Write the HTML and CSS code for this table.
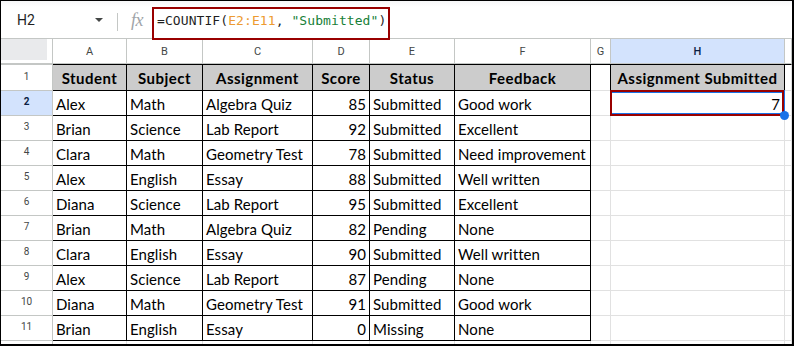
FILE: index.html
```html
<!DOCTYPE html>
<html>
<head>
<meta charset="utf-8">
<link rel="stylesheet" href="styles.css">
</head>
<body>
<div class="frame">
  <div class="toolbar">
    <div class="namebox"><span class="ref">H2</span><span class="caret"></span></div>
    <div class="sep"></div>
    <div class="fx">fx</div>
    <div class="formula">=COUNTIF(<span class="rng">E2:E11</span>, <span class="str">"Submitted"</span>)</div>
    <div class="annot-formula"></div>
  </div>
  <div class="sheet">
    <div class="c corner"><div class="corner-fill"></div></div>
    <div class="c ch">A</div><div class="c ch">B</div><div class="c ch">C</div><div class="c ch">D</div><div class="c ch">E</div><div class="c ch">F</div><div class="c ch">G</div><div class="c ch sel">H</div><div class="c ch"></div>

    <div class="c rn r1">1</div>
    <div class="c d h r1">Student</div><div class="c d h r1">Subject</div><div class="c d h r1">Assignment</div><div class="c d h r1">Score</div><div class="c d h r1">Status</div><div class="c d h r1">Feedback</div>
    <div class="c g r1 gb"></div><div class="c d h r1">Assignment Submitted</div><div class="c r1"></div>

    <div class="c rn rsel">2</div>
    <div class="c d">Alex</div><div class="c d">Math</div><div class="c d">Algebra Quiz</div><div class="c d n">85</div><div class="c d">Submitted</div><div class="c d">Good work</div>
    <div class="c g"></div><div class="c n result">7</div><div class="c"></div>

    <div class="c rn">3</div>
    <div class="c d">Brian</div><div class="c d">Science</div><div class="c d">Lab Report</div><div class="c d n">92</div><div class="c d">Submitted</div><div class="c d">Excellent</div>
    <div class="c g"></div><div class="c"></div><div class="c"></div>

    <div class="c rn">4</div>
    <div class="c d">Clara</div><div class="c d">Math</div><div class="c d">Geometry Test</div><div class="c d n">78</div><div class="c d">Submitted</div><div class="c d">Need improvement</div>
    <div class="c g"></div><div class="c"></div><div class="c"></div>

    <div class="c rn">5</div>
    <div class="c d">Alex</div><div class="c d">English</div><div class="c d">Essay</div><div class="c d n">88</div><div class="c d">Submitted</div><div class="c d">Well written</div>
    <div class="c g"></div><div class="c"></div><div class="c"></div>

    <div class="c rn">6</div>
    <div class="c d">Diana</div><div class="c d">Science</div><div class="c d">Lab Report</div><div class="c d n">95</div><div class="c d">Submitted</div><div class="c d">Excellent</div>
    <div class="c g"></div><div class="c"></div><div class="c"></div>

    <div class="c rn">7</div>
    <div class="c d">Brian</div><div class="c d">Math</div><div class="c d">Algebra Quiz</div><div class="c d n">82</div><div class="c d">Pending</div><div class="c d">None</div>
    <div class="c g"></div><div class="c"></div><div class="c"></div>

    <div class="c rn">8</div>
    <div class="c d">Clara</div><div class="c d">English</div><div class="c d">Essay</div><div class="c d n">90</div><div class="c d">Submitted</div><div class="c d">Well written</div>
    <div class="c g"></div><div class="c"></div><div class="c"></div>

    <div class="c rn">9</div>
    <div class="c d">Alex</div><div class="c d">Science</div><div class="c d">Lab Report</div><div class="c d n">87</div><div class="c d">Pending</div><div class="c d">None</div>
    <div class="c g"></div><div class="c"></div><div class="c"></div>

    <div class="c rn">10</div>
    <div class="c d">Diana</div><div class="c d">Math</div><div class="c d">Geometry Test</div><div class="c d n">91</div><div class="c d">Submitted</div><div class="c d">Good work</div>
    <div class="c g"></div><div class="c"></div><div class="c"></div>

    <div class="c rn">11</div>
    <div class="c d">Brian</div><div class="c d">English</div><div class="c d">Essay</div><div class="c d n">0</div><div class="c d">Missing</div><div class="c d">None</div>
    <div class="c g"></div><div class="c"></div><div class="c"></div>

    <div class="c rn last"></div><div class="c last"></div><div class="c last"></div><div class="c last"></div><div class="c last"></div><div class="c last"></div><div class="c last"></div><div class="c last"></div><div class="c last"></div><div class="c last"></div>

    <div class="annot-cell"></div>
    <div class="sel-edge"></div>
    <div class="handle"></div>
  </div>
</div>
</body>
</html>
```

FILE: styles.css
```css
* { box-sizing: border-box; }
html, body { margin: 0; padding: 0; background: #fff; }
.frame {
  width: 794px;
  height: 346px;
  border-top: 1px solid #000;
  border-left: 1px solid #000;
  border-right: 2px solid #000;
  border-bottom: 2px solid #000;
  overflow: hidden;
  position: relative;
  display: flex;
  flex-direction: column;
}
.toolbar {
  height: 38px;
  flex: none;
  border-bottom: 1px solid #c4c7c5;
  display: flex;
  align-items: center;
  position: relative;
  background: linear-gradient(#f6f7f8 0, #fff 6px);
}
.namebox {
  width: 116px;
  display: flex;
  align-items: center;
  padding-left: 16px;
  padding-top: 1px;
}
.ref {
  font-family: Roboto, "Liberation Sans", sans-serif;
  font-size: 14px;
  color: #1f1f1f;
  flex: 1;
}
.caret {
  width: 0; height: 0;
  border-left: 4px solid transparent;
  border-right: 4px solid transparent;
  border-top: 4px solid #444746;
  margin-right: 14px;
}
.sep {
  width: 1px;
  height: 18px;
  background: #c4c7c5;
  margin-top: 8px;
  margin-bottom: 4px;
  align-self: center;
}
.fx {
  font-family: "Liberation Serif", serif;
  font-style: italic;
  font-size: 18px;
  color: #a0a4a8;
  margin-left: 13px;
  width: 26px;
  letter-spacing: -0.5px;
  padding-top: 1px;
}
.formula {
  font-family: "DejaVu Sans Mono", monospace;
  font-size: 13px;
  color: #1f1f1f;
  letter-spacing: 0.08px;
  padding-top: 1px;
}
.rng { color: #ed9b31; }
.str { color: #188038; }
.annot-formula {
  position: absolute;
  left: 151px;
  top: 6px;
  width: 238px;
  height: 33px;
  border: 2px solid #990000;
  z-index: 5;
}
.sheet {
  flex: 1;
  display: grid;
  grid-template-columns: 52px 74px 76px 110px 57px 85px 136px 20px 174px 1fr;
  grid-template-rows: 25px 27px repeat(10, 25px) 1fr;
  position: relative;
}
.c {
  border-right: 1px solid #e1e1e1;
  border-bottom: 1px solid #e1e1e1;
  font-family: Lato, "Liberation Sans", sans-serif;
  font-size: 15px;
  letter-spacing: 0.08px;
  color: #000;
  white-space: nowrap;
  overflow: hidden;
  display: flex;
  align-items: center;
  padding: 1px 3px 0 3px;
}
.ch {
  border-right: 1px solid #c4c7c5;
  border-bottom: 1px solid #c4c7c5;
  font-family: Roboto, "Liberation Sans", sans-serif;
  font-size: 11px;
  letter-spacing: 0;
  color: #444746;
  justify-content: center;
  padding: 0;
}
.ch.sel {
  background: #d3e3fd;
  color: #0b1f44;
  font-weight: 500;
}
.corner {
  padding: 0;
  border-right: 1px solid #c4c7c5;
  border-bottom: 1px solid #c4c7c5;
  align-items: flex-start;
  background: #fff;
}
.corner-fill {
  width: 46px;
  height: 21px;
  background: #e9eaec;
}
.rn {
  border-right: 1px solid #c4c7c5;
  border-bottom: 1px solid #c4c7c5;
  font-family: Roboto, "Liberation Sans", sans-serif;
  font-size: 10px;
  letter-spacing: 0;
  color: #444746;
  justify-content: center;
  padding: 0 0 3px 0;
}
.rn.r1 { border-top: 1px solid #c4c7c5; }
.rsel {
  background: #d3e3fd;
  color: #0b1f44;
  font-weight: 700;
}
.d {
  border-right: 1px solid #000;
  border-bottom: 1px solid #000;
}
.r1 { border-top: 1px solid #000; }
.g.gb { border-right: 1px solid #000; }
.h {
  background: #cccccc;
  font-weight: 700;
  letter-spacing: 0.45px;
  justify-content: center;
  padding: 1px 0 0 0;
}
.n { justify-content: flex-end; }
.result { padding-right: 4px; }
.last { border-bottom: none; }
.annot-cell {
  position: absolute;
  left: 609px;
  top: 51px;
  width: 174px;
  height: 26px;
  border: 2px solid #990000;
  box-shadow: inset 0 1px 0 #1a73e8, inset 0 -1px 0 #1a73e8;
  z-index: 4;
}
.sel-edge {
  position: absolute;
  left: 782px;
  top: 51px;
  width: 2px;
  height: 26px;
  background: #1a73e8;
  z-index: 3;
}
.handle {
  position: absolute;
  left: 779px;
  top: 72px;
  width: 9px;
  height: 9px;
  border-radius: 50%;
  background: #1a73e8;
  z-index: 6;
}
```
